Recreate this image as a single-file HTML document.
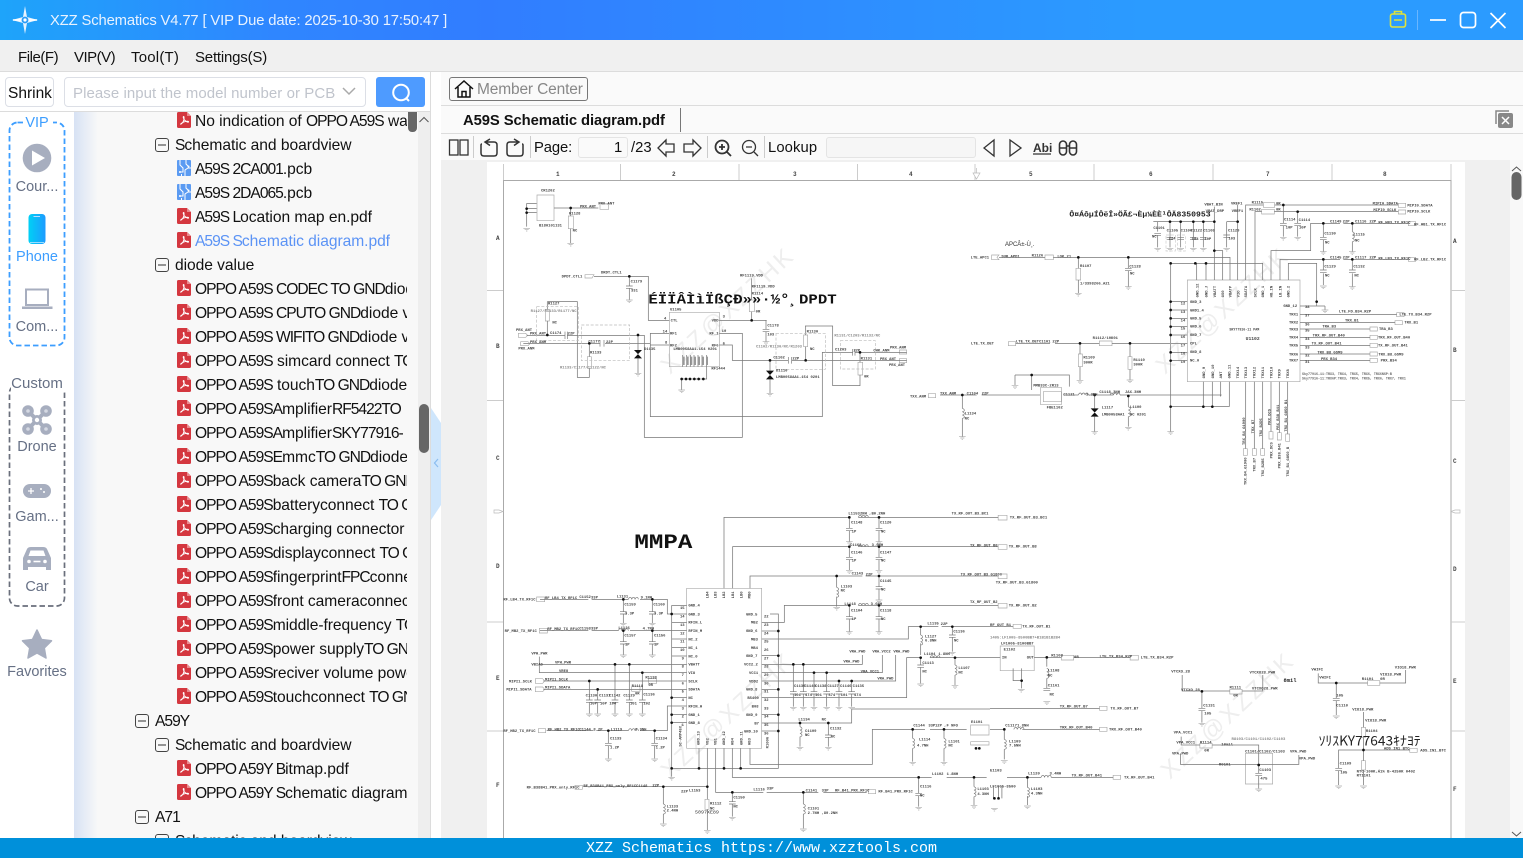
<!DOCTYPE html>
<html><head><meta charset="utf-8"><title>XZZ Schematics</title>
<style>
*{box-sizing:border-box}
html,body{margin:0;padding:0;width:1523px;height:858px;overflow:hidden;background:#fff;font-family:"Liberation Sans","Noto Sans CJK SC",sans-serif;color:#111}
.a{position:absolute}
.t{position:absolute;white-space:nowrap;line-height:20px;height:20px;font-size:15.5px}
#tree .t{font-size:15.6px;letter-spacing:-.05px}
#tree em{font-style:normal;letter-spacing:-1px}
.side{position:absolute;left:0;width:74px;text-align:center;font-size:14.5px;line-height:18px;color:#667085;white-space:nowrap}
svg{position:absolute;overflow:hidden}
.s text{font-family:"Liberation Mono",monospace;font-weight:bold;font-size:11.5px;fill:#444}
.s .w{fill:none;stroke:#777;stroke-width:2.2}
.s .b{fill:none;stroke:#aaa;stroke-width:2}
.s .d{fill:none;stroke:#bbb;stroke-width:2;stroke-dasharray:9 5}
.s .k{fill:#111}
</style></head><body>
<!-- title bar -->
<div class="a" style="left:0;top:0;width:1523px;height:40px;background:linear-gradient(90deg,#1ea4fa 0,#2f86ff 18%,#317dff 32%,#2b9bff 75%,#2b9bff 100%)"></div>
<svg style="left:10px;top:5px" width="30" height="30" viewBox="0 0 30 30"><path d="M15 1L17 12L28 15L17 18L15 29L13 18L2 15L13 12Z" fill="#e6f3ff"/><circle cx="15" cy="15" r="3.4" fill="#2a9cf8"/><circle cx="15" cy="15" r="1.6" fill="#fff"/><path d="M11 15H3M19 15H27" stroke="#fff" stroke-width="1.4"/></svg>
<div class="t" style="left:50px;top:11px;color:#e8f2ff;font-size:14.8px;letter-spacing:-.14px">XZZ Schematics V4.77 [ VIP Due date: 2025-10-30 17:50:47 ]</div>
<svg style="left:1385px;top:6px" width="130" height="28" viewBox="0 0 130 28"><g fill="none" stroke="#dfe33b" stroke-width="1.6"><rect x="5.5" y="8" width="15" height="13" rx="2"/><path d="M9.5 8V5.5H16.500V8M9 14H17"/></g><path d="M32.500 4V24" stroke="#6ab6ff" stroke-width="1"/><g fill="none" stroke="#fff" stroke-width="1.7"><path d="M45 14H61"/><rect x="75.500" y="6.500" width="15" height="15" rx="3"/><path d="M105.500 7L120.500 22M120.500 7L105.500 22"/></g></svg>
<!-- menu -->
<div class="a" style="left:0;top:40px;width:1523px;height:32px;background:#f0f0f0;border-bottom:1px solid #dcdcdc"></div>
<div class="t" style="left:18px;top:48px;font-size:15px;letter-spacing:-.45px">File(F)</div>
<div class="t" style="left:74px;top:48px;font-size:15px;letter-spacing:-.5px">VIP(V)</div>
<div class="t" style="left:131px;top:48px;font-size:15px;letter-spacing:.2px">Tool(T)</div>
<div class="t" style="left:195px;top:48px;font-size:15px;letter-spacing:-.2px">Settings(S)</div>
<!-- search row -->
<div class="a" style="left:0;top:72px;width:431px;height:40px;background:#fff;border-bottom:1px solid #dcdcdc"></div>
<div class="a" style="left:5px;top:77px;width:49px;height:30px;border:1px solid #dcdfe6;border-radius:4px"></div>
<div class="t" style="left:8px;top:84px;font-size:15.5px">Shrink</div>
<div class="a" style="left:64px;top:77px;width:302px;height:30px;border:1px solid #dcdfe6;border-radius:4px"></div>
<div class="t" style="left:73px;top:84px;color:#c0c4cc;font-size:15px;letter-spacing:.06px">Please input the model number or PCB</div>
<svg style="left:340px;top:85px" width="18" height="14"><path d="M3 3L9 9L15 3" fill="none" stroke="#aaa" stroke-width="1.5"/></svg>
<div class="a" style="left:376px;top:77px;width:49px;height:30px;background:#4e9bff;border-radius:3px"></div>
<svg style="left:388px;top:81px" width="26" height="24"><circle cx="13" cy="11.500" r="7.800" fill="none" stroke="#fff" stroke-width="2"/><path d="M18 17L21 20" stroke="#fff" stroke-width="2"/></svg>
<!-- sidebar -->
<svg style="left:0;top:112px" width="74" height="726" viewBox="0 112 74 726">
<rect x="9.500" y="122.500" width="55" height="223" rx="8" fill="none" stroke="#3d9eff" stroke-width="1.800" stroke-dasharray="5.500 3"/>
<rect x="9.500" y="385" width="55" height="221" rx="8" fill="none" stroke="#6a6f7c" stroke-width="1.700" stroke-dasharray="5.500 3"/>
<rect x="23" y="115" width="30" height="16" fill="#fff"/><rect x="11" y="376" width="54" height="15" fill="#fff"/>
<circle cx="37" cy="158" r="14.300" fill="#a7aebf"/><path d="M32 150.500L45 158L32 165.500Z" fill="#fff"/>
<defs><linearGradient id="ph" x1="0" x2="1"><stop offset="0" stop-color="#00d0f5"/><stop offset="1" stop-color="#1d9bff"/></linearGradient></defs>
<rect x="28.500" y="214" width="17" height="30" rx="3.500" fill="url(#ph)"/><path d="M33.500 216.500H40" stroke="#bdf" stroke-width="1"/><path d="M30 242.500H44" stroke="#9df" stroke-width="1"/>
<path d="M26 289.500H48V305H26Z" fill="none" stroke="#a7aebf" stroke-width="2"/><path d="M22 306.500H52.500V309H22Z" fill="#a7aebf"/>
<path d="M28 411L46 429M46 411L28 429" stroke="#a7aebf" stroke-width="4" fill="none"/><g fill="#a7aebf"><circle cx="28" cy="411" r="5.800"/><circle cx="46" cy="411" r="5.800"/><circle cx="28" cy="429" r="5.800"/><circle cx="46" cy="429" r="5.800"/><circle cx="37" cy="420" r="5"/></g><g fill="#d5d9e3"><circle cx="28" cy="411" r="1.800"/><circle cx="46" cy="411" r="1.800"/><circle cx="28" cy="429" r="1.800"/><circle cx="46" cy="429" r="1.800"/></g><circle cx="37" cy="420" r="2.200" fill="#fff"/>
<rect x="23" y="484" width="28" height="14" rx="7" fill="#a7aebf"/><path d="M28 491H34M31 488V494" stroke="#fff" stroke-width="1.300"/><circle cx="41" cy="489" r="1" fill="#fff"/><circle cx="44" cy="492" r="1" fill="#fff"/>
<path d="M23 570V558L27 549Q28 547 31 547H43Q46 547 47 549L51 558V570H46V567H28V570Z" fill="#a7aebf"/><path d="M28.500 556L30.500 550.500H43.500L45.500 556Z" fill="#fff"/><circle cx="29" cy="561.500" r="1.800" fill="#fff"/><circle cx="45" cy="561.500" r="1.800" fill="#fff"/><path d="M33.500 561.500H40.500" stroke="#fff" stroke-width="1.600"/>
<path d="M37 630L41.500 639.500L51.500 640.800L44.300 648L46 658L37 653L28 658L29.700 648L22.500 640.800L32.500 639.500Z" fill="#a7aebf" stroke="#a7aebf" stroke-width="1.500" stroke-linejoin="round"/>
</svg>
<div class="side" style="top:114px;color:#3d9eff">VIP</div>
<div class="side" style="top:178px">Cour...</div>
<div class="side" style="top:248px;color:#3d9eff">Phone</div>
<div class="side" style="top:318px">Com...</div>
<div class="side" style="top:375px;font-size:15px">Custom</div>
<div class="side" style="top:438px">Drone</div>
<div class="side" style="top:508px">Gam...</div>
<div class="side" style="top:578px">Car</div>
<div class="side" style="top:663px">Favorites</div>
<!-- tree -->
<div class="a" style="left:74px;top:112px;width:345px;height:726px;background:linear-gradient(90deg,#d7e2f4 0,#f8f8f8 24px)"></div>
<div class="a" style="left:418px;top:112px;width:12px;height:726px;background:#eeeeee"></div>
<div class="a" style="left:430px;top:72px;width:1px;height:766px;background:#dcdcdc"></div>
<div class="a" style="left:408px;top:112px;width:9px;height:20px;background:#666;border-radius:0 0 4px 4px;z-index:2"></div>
<div class="a" style="left:419px;top:404px;width:10px;height:49px;background:#666;border-radius:5px"></div>
<svg style="left:418px;top:114px" width="12" height="12"><path d="M1.500 8L6 3.500L10.500 8" fill="none" stroke="#555" stroke-width="1"/></svg>
<svg style="left:431px;top:405px" width="11" height="118"><path d="M0 3L10 18V100L0 115Z" fill="#cfe6fc"/><path d="M7 54L3.500 58L7 62" fill="none" stroke="#8bbdf0" stroke-width="1.200"/></svg>
<svg width="0" height="0" style="position:absolute"><defs>
<g id="pdf"><path d="M0 1.500Q0 0 1.500 0H10L14 4V14.500Q14 16 12.500 16H1.500Q0 16 0 14.500Z" fill="#d4373f"/><path d="M10 0V4H14" fill="#e98a8e"/><path d="M3.500 12.500C6 11 7.500 8 7 5C6.800 4 6 4.500 6.300 5.500C6.800 7.500 8.800 10 11 10.200C11.900 10.200 11.700 9.200 10.800 9.200C8 9.200 5 10.500 3.300 12.300" fill="none" stroke="#fff" stroke-width="1"/></g>
<g id="pcb"><rect width="14" height="16" rx="1" fill="#5b9bf2"/><path d="M3 0V5L6 8V12H2M9 0V4L11.500 6.500M8 16V10L11 8H14M4.500 14V16" fill="none" stroke="#fff" stroke-width="1"/><circle cx="11.500" cy="6.500" r="1" fill="#fff"/><circle cx="3" cy="12" r="1" fill="#fff"/></g>
<g id="min"><rect x=".5" y=".5" width="13" height="13" rx="2.500" fill="none" stroke="#444" stroke-width="1"/><path d="M3 7H11" stroke="#444" stroke-width="1.100"/></g>
</defs></svg>
<div id="tree" class="a" style="left:0;top:112px;width:407px;height:726px;overflow:hidden">
<svg style="left:0;top:0" width="407" height="740" viewBox="0 112 407 740">
<use href="#pdf" x="177" y="112"/><use href="#min" x="155" y="138"/><use href="#pcb" x="177" y="160"/><use href="#pcb" x="177" y="184"/><use href="#pdf" x="177" y="208"/><use href="#pdf" x="177" y="232"/><use href="#min" x="155" y="258"/>
<use href="#pdf" x="177" y="280"/><use href="#pdf" x="177" y="304"/><use href="#pdf" x="177" y="328"/><use href="#pdf" x="177" y="352"/><use href="#pdf" x="177" y="376"/><use href="#pdf" x="177" y="400"/><use href="#pdf" x="177" y="424"/><use href="#pdf" x="177" y="448"/><use href="#pdf" x="177" y="472"/><use href="#pdf" x="177" y="496"/><use href="#pdf" x="177" y="520"/><use href="#pdf" x="177" y="544"/><use href="#pdf" x="177" y="568"/><use href="#pdf" x="177" y="592"/><use href="#pdf" x="177" y="616"/><use href="#pdf" x="177" y="640"/><use href="#pdf" x="177" y="664"/><use href="#pdf" x="177" y="688"/>
<use href="#min" x="135" y="714"/><use href="#min" x="155" y="738"/><use href="#pdf" x="177" y="760"/><use href="#pdf" x="177" y="784"/><use href="#min" x="135" y="810"/><use href="#min" x="155" y="834"/>
</svg>
<div class="t" style="left:195px;top:0px">No indication of <em>OPPO A59S</em> warranty</div>
<div class="t" style="left:175px;top:24px"><em>S</em>chematic and boardview</div>
<div class="t" style="left:195px;top:48px"><em>A59S 2CA001</em>.pcb</div>
<div class="t" style="left:195px;top:72px"><em>A59S 2DA065</em>.pcb</div>
<div class="t" style="left:195px;top:96px"><em>A59S L</em>ocation map en.pdf</div>
<div class="t" style="left:195px;top:120px;color:#5b93f5"><em>A59S S</em>chematic diagram.pdf</div>
<div class="t" style="left:175px;top:144px">diode value</div>
<div class="t" style="left:195px;top:168px"><em>OPPO A59S CODEC TO GND</em>diode value</div>
<div class="t" style="left:195px;top:192px"><em>OPPO A59S CPUTO GND</em>diode value</div>
<div class="t" style="left:195px;top:216px"><em>OPPO A59S WIFITO GND</em>diode value</div>
<div class="t" style="left:195px;top:240px"><em>OPPO A59S</em> simcard connect <em>TO GND</em></div>
<div class="t" style="left:195px;top:264px"><em>OPPO A59S</em> touch<em>TO GND</em>diode value</div>
<div class="t" style="left:195px;top:288px"><em>OPPO A59SA</em>mplifier<em>RF5422TO</em></div>
<div class="t" style="left:195px;top:312px"><em>OPPO A59SA</em>mplifier<em>SKY77916-</em></div>
<div class="t" style="left:195px;top:336px"><em>OPPO A59SE</em>mmc<em>TO GND</em>diode value</div>
<div class="t" style="left:195px;top:360px"><em>OPPO A59S</em>back camera<em>TO GND</em></div>
<div class="t" style="left:195px;top:384px"><em>OPPO A59S</em>batteryconnect <em>TO GND</em></div>
<div class="t" style="left:195px;top:408px"><em>OPPO A59S</em>charging connector <em>TO</em></div>
<div class="t" style="left:195px;top:432px"><em>OPPO A59S</em>displayconnect <em>TO GND</em></div>
<div class="t" style="left:195px;top:456px"><em>OPPO A59S</em>fingerprint<em>FPC</em>connect</div>
<div class="t" style="left:195px;top:480px"><em>OPPO A59S</em>front cameraconnect <em>TO</em></div>
<div class="t" style="left:195px;top:504px"><em>OPPO A59S</em>middle-frequency <em>TO</em></div>
<div class="t" style="left:195px;top:528px"><em>OPPO A59S</em>power supply<em>TO GND</em></div>
<div class="t" style="left:195px;top:552px"><em>OPPO A59S</em>reciver volume power</div>
<div class="t" style="left:195px;top:576px"><em>OPPO A59S</em>touchconnect <em>TO GND</em></div>
<div class="t" style="left:155px;top:600px"><em>A59Y</em></div>
<div class="t" style="left:175px;top:624px"><em>S</em>chematic and boardview</div>
<div class="t" style="left:195px;top:648px"><em>OPPO A59Y B</em>itmap.pdf</div>
<div class="t" style="left:195px;top:672px"><em>OPPO A59Y S</em>chematic diagram</div>
<div class="t" style="left:155px;top:696px"><em>A71</em></div>
<div class="t" style="left:175px;top:720px"><em>S</em>chematic and boardview</div>
</div>
<!-- right panel -->
<div class="a" style="left:441px;top:72px;width:1082px;height:34px;background:#fafafa;border-bottom:1px solid #dcdcdc"></div>
<div class="a" style="left:441px;top:106px;width:1082px;height:28px;background:#fafafa;border-bottom:1px solid #dcdcdc"></div>
<div class="a" style="left:441px;top:134px;width:1082px;height:26px;background:#fafafa"></div>
<div class="a" style="left:441px;top:160px;width:1069px;height:678px;background:#f0f0f0"></div>
<div class="a" style="left:1510px;top:160px;width:13px;height:678px;background:#f8f8f8"></div>
<div class="a" style="left:449px;top:77px;width:139px;height:24px;border:1px solid #777;border-radius:3px"></div>
<svg style="left:453px;top:79px" width="22" height="20"><path d="M2 10L11 2L20 10M5 8V18H17V8M9 18V12.500H13V18" fill="none" stroke="#111" stroke-width="1.500"/></svg>
<div class="t" style="left:477px;top:80px;color:#888;font-size:15.5px;letter-spacing:-.15px">Member Center</div>
<div class="t" style="left:463px;top:111px;font-weight:bold;font-size:14.8px;letter-spacing:-.08px">A59S Schematic diagram.pdf</div>
<div class="a" style="left:680px;top:108px;width:1px;height:24px;background:#777"></div>
<svg style="left:1494px;top:109px" width="20" height="20"><path d="M2 15V2H15" fill="none" stroke="#888" stroke-width="1.500"/><rect x="4" y="4" width="15" height="15" rx="2" fill="#888"/><path d="M8 8L15 15M15 8L8 15" stroke="#fff" stroke-width="1.500"/></svg>
<svg style="left:445px;top:134px" width="640" height="26" viewBox="445 134 640 26"><g fill="none" stroke="#333" stroke-width="1.300">
<rect x="449.500" y="140" width="8.500" height="15"/><rect x="460" y="140" width="8" height="15"/>
<path d="M490 139L485 142L490 145.500M486 142H494Q497 142 497 145V153Q497 156 494 156H484Q481 156 481 153V145Q481 144 482 144" stroke-width="1.500"/>
<path d="M514 139L519 142L514 145.500M518 142H510Q507 142 507 145V153Q507 156 510 156H520Q523 156 523 153V145Q523 144 522 144" stroke-width="1.500"/>
<path d="M658 148L666 140V144H674V152H666V156Z"/>
<path d="M701 148L693 140V144H684V152H693V156Z"/>
<circle cx="722" cy="147" r="6.500" stroke-width="1.800"/><path d="M727 152L731 156M719 147H725M722 144V150" stroke-width="1.800"/>
<circle cx="749" cy="147" r="6.500"/><path d="M754 152L758 156M746 147H752"/>
<path d="M994 140L984 148L994 156Z"/><path d="M1010 140L1021 148L1010 156Z"/>
<path d="M1033 154H1051" />
<rect x="1059.500" y="141" width="7" height="14" rx="3.500" stroke-width="1.600"/><rect x="1069.500" y="141" width="7" height="14" rx="3.500" stroke-width="1.600"/><path d="M1066 146H1070M1059.500 148H1066.500M1069.500 148H1076.500" stroke-width="1.600"/>
</g><g stroke="#ccc"><path d="M473.500 136V158M530.500 136V158M707.500 136V158M764.500 136V158"/></g></svg>
<div class="t" style="left:534px;top:138px;font-size:14.800px;letter-spacing:-.1px">Page:</div>
<div class="a" style="left:578px;top:137px;width:50px;height:21px;border:1px solid #e4e4e4;border-radius:3px;background:#fafafa"></div>
<div class="t" style="left:614px;top:138px;font-size:14.800px">1</div>
<div class="t" style="left:631px;top:138px;font-size:14.800px">/23</div>
<div class="t" style="left:768px;top:138px;font-size:14.800px;letter-spacing:.1px">Lookup</div>
<div class="a" style="left:826px;top:137px;width:150px;height:21px;border:1px solid #e4e4e4;border-radius:3px;background:#f6f6f6"></div>
<div class="t" style="left:1033px;top:138px;font-size:12px;font-weight:bold;color:#333">Abi</div>
<!-- scrollbar -->
<svg style="left:1510px;top:160px" width="13" height="678"><path d="M2 11L6.500 7L11 11" fill="none" stroke="#555"/><rect x="1.500" y="12" width="10" height="28" rx="5" fill="#666"/><path d="M2 672L6.500 676L11 672" fill="none" stroke="#555"/></svg>
<!-- page -->
<div class="a" style="left:487px;top:162px;width:978px;height:676px;background:#fff"></div>
<svg class="s" style="left:487px;top:162px" width="978" height="676" viewBox="487 162 978 676">
<defs>
<g id="g"><path d="M-10 0H10M-6 4H6M-2 8H2" stroke="#aaa" stroke-width="2" fill="none"/></g>
<g id="c"><path d="M-10 0H10M-10 7H10" stroke="#777" stroke-width="2" fill="none"/></g>
<g id="l"><path d="M0 0C8 3 8 9 0 10C8 13 8 19 0 20C8 23 8 29 0 30" stroke="#777" stroke-width="2" fill="none"/></g>
<g id="h"><path d="M0 0C3 -8 9 -8 10 0C13 -8 19 -8 20 0C23 -8 29 -8 30 0" stroke="#777" stroke-width="2" fill="none"/></g>
</defs>
<!-- watermarks -->
<g>
<text transform="translate(670 375) rotate(-43)" style="font-size:24px;font-weight:normal;fill:#eeeeee;font-family:'Liberation Sans'" textLength="170">XZZ@XZZHK</text>
<text transform="translate(1165 375) rotate(-43)" style="font-size:24px;font-weight:normal;fill:#eeeeee;font-family:'Liberation Sans'" textLength="170">XZZ@XZZHK</text>
<text transform="translate(670 780) rotate(-43)" style="font-size:24px;font-weight:normal;fill:#eeeeee;font-family:'Liberation Sans'" textLength="170">XZZ@XZZHK</text>
<text transform="translate(1170 780) rotate(-43)" style="font-size:24px;font-weight:normal;fill:#eeeeee;font-family:'Liberation Sans'" textLength="170">XZZ@XZZHK</text>
</g>
<!-- frame -->
<path d="M503.500 838V180.500H1451V838" fill="none" stroke="#aaa" stroke-width="1"/>
<path d="M503.500 164V180M620.500 164V180M739 164V180M857.500 164V180M975 164V180M1094 164V180M1213 164V180M1332 164V180M1451 164V180" stroke="#ccc" stroke-width="1"/>
<path d="M487 290.500H503M487 400.500H503M487 622H503M487 731H503M1451 290.500H1465M1451 400.500H1465M1451 622H1465M1451 731H1465" stroke="#ccc" stroke-width="1"/>
<path d="M973 173H980L976.500 179ZM976.500 168V173M494 510H499L503 511.500L499 513H494ZM1460 510H1455L1451 511.500L1455 513H1460Z" fill="#fff" stroke="#bbb" stroke-width=".7"/>
<g style="font-size:5.800px"><text x="556" y="176" style="font-size:6px">1</text><text x="672" y="176" style="font-size:6px">2</text><text x="793" y="176" style="font-size:6px">3</text><text x="909" y="176" style="font-size:6px">4</text><text x="1029" y="176" style="font-size:6px">5</text><text x="1149" y="176" style="font-size:6px">6</text><text x="1266" y="176" style="font-size:6px">7</text><text x="1383" y="176" style="font-size:6px">8</text>
<text x="496" y="240" style="font-size:6px">A</text><text x="496" y="348" style="font-size:6px">B</text><text x="496" y="460" style="font-size:6px">C</text><text x="496" y="568" style="font-size:6px">D</text><text x="496" y="680" style="font-size:6px">E</text><text x="496" y="787" style="font-size:6px">F</text>
<text x="1453" y="243" style="font-size:6px">A</text><text x="1453" y="352" style="font-size:6px">B</text><text x="1453" y="463" style="font-size:6px">C</text><text x="1453" y="571" style="font-size:6px">D</text><text x="1453" y="683" style="font-size:6px">E</text><text x="1453" y="791" style="font-size:6px">F</text></g>

<!-- Group 1 -->
<g transform="translate(490 160) scale(.33333)">
<path class="b" d="M141 105h51v77h-51zM235 168h15v38h-15zM538 457h150v163h-150zM778 420h15v35h-15zM166 448h12v35h-12zM292 590h12v35h-12zM941 525h12v35h-12zM1104 607h14v38h-14zM285 344h27l-6 10h-21zM330 130h26v18h-26zM85 520h22l6 6l-6 6h-22zM92 545h22l6 6l-6 6h-22zM1228 570h22v12h-22zM1228 596h22v12h-22zM1315 701h22v12h-22z"/>
<path class="w" d="M192 144H325M110 130V200M110 130H140M110 145H140M110 158H140M242 144V168M242 206V250M312 349H475V481H538M418 349V378M418 385V420M688 481H830M785 355V420M785 455V481M828 481V508M828 516V545M110 526H225M232 526H463V832H757V520H688M100 550H330M345 550H481V770H997V577H1088M1095 577H1250M481 550V520H538M481 555H538M444 525V570M444 595V640M688 555H727V601H895M905 601H1250M840 601V632M840 658V700M575 657H650V620M575 657V690M172 425H262V652H298V625M172 425V448M172 483V526M298 550V590M945 498H1028V677H1110V645M947 498V525M947 560V601M1110 577V607M578 585V620M590 585V620M601 585V620M612 585V620M624 585V620M636 585V620M650 585V620"/>
<path class="d" d="M140 440h125v102h-125zM274 495h145v107h-145zM858 520h148v108h-148zM1051 542h105v85h-105z"/>
<path class="k" d="M432 570H456L432 595H456ZM828 632H852L828 658H852Z"/>
<path d="M578 590h6v25h-6zM590 590h6v25h-6zM601 590h6v25h-6zM612 590h6v25h-6zM624 590h6v25h-6zM636 590h6v25h-6zM648 590h6v25h-6z" fill="#999"/>
<g class="k"><circle cx="242" cy="144" r="4"/><circle cx="110" cy="146" r="4"/><circle cx="110" cy="158" r="4"/><circle cx="418" cy="349" r="4"/><circle cx="785" cy="481" r="4"/><circle cx="172" cy="525" r="4"/><circle cx="298" cy="550" r="4"/><circle cx="444" cy="525" r="4"/><circle cx="840" cy="601" r="4"/><circle cx="947" cy="601" r="4"/><circle cx="1110" cy="577" r="4"/><circle cx="575" cy="657" r="4"/><circle cx="588" cy="657" r="4"/><circle cx="600" cy="657" r="4"/><circle cx="613" cy="657" r="4"/><circle cx="626" cy="657" r="4"/><circle cx="640" cy="657" r="4"/></g>
<use href="#g" x="110" y="205"/><use href="#g" x="242" y="250"/><use href="#g" x="418" y="420"/><use href="#g" x="828" y="545"/><use href="#g" x="444" y="640"/><use href="#g" x="840" y="700"/><use href="#g" x="575" y="690"/>
<use href="#c" x="418" y="378"/><use href="#c" x="828" y="508"/>
<path d="M225 515V537M232 515V537M330 540V560M342 540V560M895 591V611M905 591V611M1088 567V587M1095 567V587" stroke="#777" stroke-width="2"/>
<text x="153" y="94">CR1202</text><text x="237" y="163">R1128</text><text x="147" y="199">B180101131</text><text x="270" y="142">PRX_ANT</text><text x="325" y="134">PRX_ANT</text><text x="248" y="215">NC</text><text x="215" y="353">DPDT_CTL1</text><text x="333" y="340">DRDT_CTL1</text><text x="422" y="368">C1179</text><text x="423" y="395">331</text><text x="750" y="350">RF1119_VDD</text><text x="785" y="383">RF1119_VDD</text><text x="785" y="403">R1114</text><text x="797" y="458">0R</text><text x="832" y="500">C1178</text><text x="832" y="526">103</text><text x="540" y="452">U1105</text><text x="542" y="485">CTL</text><text x="540" y="523">RF1</text><text x="540" y="559">RF2</text><text x="665" y="485">VDD</text><text x="658" y="523">RF_1</text><text x="665" y="559">RF6</text><text x="550" y="570">LMB0058AA1-154 0201</text><text x="664" y="628">RF1444</text><text x="174" y="434">R1127</text><text x="78" y="513">PRX_ANT</text><text x="120" y="524">PRX_ANT</text><text x="120" y="549">PRX_ANM</text><text x="85" y="568">PRX_ANM</text><text x="180" y="522">C1174</text><text x="233" y="524">22P</text><text x="295" y="547">C1177</text><text x="348" y="549">22P</text><text x="300" y="580">R1133</text><text x="187" y="490">NC</text><text x="462" y="570">D1135</text><text x="850" y="595">C1102</text><text x="907" y="599">22P</text><text x="858" y="634">D1110</text><text x="858" y="654">LMB0058AA1-154 0201</text><text x="950" y="517">R1130</text><text x="960" y="570">NC</text><text x="1035" y="572">C1203</text><text x="1090" y="574">22P</text><text x="1150" y="574">CHK_ANM</text><text x="1170" y="600">PRX_ANT</text><text x="1200" y="566">PRX_ANM</text><text x="1197" y="618">PRX_ANT</text><text x="1112" y="598">R1131</text><text x="1122" y="653">0R</text><text x="1260" y="712">TXX_ANM</text><text x="522" y="479">4</text><text x="518" y="518">14</text><text x="525" y="550">8</text><text x="698" y="472">3</text><text x="695" y="516">10</text><text x="698" y="553">6</text>
<text x="122" y="456" style="fill:#888">R1127/R1133/R1177/NC</text><text x="210" y="625" style="fill:#888">R1133/C1177/C1122/NC</text><text x="798" y="563" style="fill:#888">C1102/R1130/NC/R1203</text><text x="1033" y="530" style="fill:#888">R1131/C1203/R1132/NC</text>
<text x="475" y="431" textLength="565" lengthAdjust="spacingAndGlyphs" style="font-size:42px;fill:#111;font-family:'Liberation Mono',monospace">ÉÏÏÂÌìÏßÇÐ»»·½°¸DPDT</text>
</g>

<!-- Group 2 -->
<g transform="translate(940 160)">
<g transform="scale(.33333)">
<path class="b" d="M742 360h338v305h-338zM315 285h25v14h-25zM408 325h14v35h-14zM478 543h38v14h-38zM415 582h12v38h-12zM564 590h12v38h-12zM302 682h62v52h-62zM970 128h34v14h-34zM965 148h38v14h-38zM155 285h22l-6 7l6 7h-22zM205 545h22v12h-22zM1375 130h22v12h-22zM1375 150h22v12h-22zM1405 185h22v12h-22zM1405 292h22v12h-22zM1370 458h22v12h-22zM1365 482h22v12h-22zM1290 501h22v12h-22zM1290 526h22v12h-22zM1290 550h22v12h-22zM1290 576h22v12h-22zM1290 595h22v12h-22zM910 866h12v20h-12zM937 866h12v20h-12zM962 866h12v20h-12zM987 815h12v22h-12zM1012 818h12v22h-12zM1037 822h12v22h-12z"/>
<path class="w" d="M692 310H968V360M692 310V815M770 310V360M798 310V360M692 425H742M692 450H742M692 475H742M692 500H742M692 525H742M692 550H742M692 577H742M692 602H742M823 360V140M848 360V272H823M870 360V292H340M177 292H315M893 360V135M893 185H860M917 360V135H970M1004 135H1375M945 360V155H965M1003 155H1375M993 360V272H1112V190H1200M1210 190H1410M1020 360V298H1200M1210 298H1410M1045 360V310H1130V425M1080 438H1155M1130 425V438M1155 438V450M1080 463H1370M1080 488H1365M1080 507H1290M1080 532H1290M1080 556H1290M1080 582H1290M1080 601H1290M790 665V740M817 665V740M842 665V708H840M868 665V740M692 740H868M917 665V866M943 665V866M968 665V866M993 665V815M1018 665V818M1043 665V822M640 185H823M653 185V215M653 225V262M690 185V235V262M722 185V262M760 185V262M790 185V262M860 185V222V262M1030 135V190M1030 198V230M1073 155V190M1073 198V230M1150 190V232M1150 240V275M1237 190V215M1237 245V275M1150 298V330M1150 340V375M1237 298V330M1237 340V380M415 292V325M415 360V400M565 292V325M565 332V380M227 550H330M345 550H478M516 550H690M420 550V582M420 620V660M570 550V590M570 628V660M0 705H110M125 705H300M370 705H415M445 705H520M540 705H845M225 645H388V680M275 645V690M225 645V675M464 705V745M464 770V815M67 705V745M67 775V830M565 705V740M565 770V800"/>
<g class="k"><path d="M452 745H476L452 770H476Z"/><circle cx="823" cy="185" r="4"/><circle cx="690" cy="185" r="4"/><circle cx="722" cy="185" r="4"/><circle cx="760" cy="185" r="4"/><circle cx="790" cy="185" r="4"/><circle cx="893" cy="185" r="4"/><circle cx="823" cy="272" r="4"/><circle cx="692" cy="310" r="4"/><circle cx="766" cy="310" r="4"/><circle cx="798" cy="310" r="4"/><circle cx="1030" cy="135" r="4"/><circle cx="1073" cy="155" r="4"/><circle cx="1150" cy="190" r="4"/><circle cx="1237" cy="190" r="4"/><circle cx="1150" cy="298" r="4"/><circle cx="1237" cy="298" r="4"/><circle cx="1130" cy="425" r="4"/><circle cx="415" cy="292" r="4"/><circle cx="565" cy="292" r="4"/><circle cx="420" cy="550" r="4"/><circle cx="570" cy="550" r="4"/><circle cx="692" cy="425" r="4"/><circle cx="692" cy="450" r="4"/><circle cx="692" cy="475" r="4"/><circle cx="692" cy="500" r="4"/><circle cx="692" cy="525" r="4"/><circle cx="692" cy="577" r="4"/><circle cx="692" cy="602" r="4"/><circle cx="692" cy="740" r="4"/><circle cx="790" cy="740" r="4"/><circle cx="817" cy="740" r="4"/><circle cx="67" cy="705" r="4"/><circle cx="464" cy="705" r="4"/><circle cx="565" cy="708" r="4"/><circle cx="275" cy="645" r="4"/></g>
<use href="#c" x="653" y="220"/><use href="#c" x="690" y="232"/><use href="#c" x="722" y="232"/><use href="#c" x="760" y="232"/><use href="#c" x="790" y="232"/><use href="#c" x="860" y="225"/><use href="#c" x="1030" y="190"/><use href="#c" x="1073" y="190"/><use href="#c" x="1150" y="232"/><use href="#c" x="1150" y="330"/><use href="#c" x="1237" y="330"/><use href="#c" x="565" y="325"/>
<use href="#l" x="1237" y="215"/><use href="#l" x="67" y="745"/><use href="#l" x="565" y="740"/><use href="#h" x="415" y="705"/><use href="#h" x="510" y="705"/>
<use href="#g" x="653" y="265"/><use href="#g" x="690" y="265"/><use href="#g" x="722" y="265"/><use href="#g" x="760" y="265"/><use href="#g" x="790" y="265"/><use href="#g" x="860" y="265"/><use href="#g" x="1030" y="232"/><use href="#g" x="1073" y="232"/><use href="#g" x="1150" y="275"/><use href="#g" x="1237" y="275"/><use href="#g" x="1150" y="378"/><use href="#g" x="1237" y="380"/><use href="#g" x="415" y="400"/><use href="#g" x="565" y="380"/><use href="#g" x="420" y="662"/><use href="#g" x="570" y="660"/><use href="#g" x="692" y="815"/><use href="#g" x="225" y="677"/><use href="#g" x="464" y="815"/><use href="#g" x="67" y="830"/><use href="#g" x="565" y="802"/><use href="#g" x="1155" y="450"/>
<path class="d" d="M678 225h28v48h-28zM712 225h24v48h-24z" style="stroke:#ccc"/>
<path class="b" d="M310 695h55v30h-55z"/>
<text x="388" y="170" textLength="424" lengthAdjust="spacingAndGlyphs" style="font-size:23px;fill:#222;font-family:'Liberation Mono',monospace">Ô¤ÁôµÍÔëÎ»ÖÃ£¬Èµ¼ÈÈ¹ÔÄ8350953</text>
<text x="195" y="258" style="font-size:18px;font-weight:normal;font-family:'Liberation Sans';fill:#333">APCÂ±-Ù¸.</text>
<text x="92" y="295">LTE_APC1</text><text x="184" y="292">SUB_APD1</text><text x="275" y="290">R1126</text><text x="352" y="292">LOK_21</text><text x="420" y="321">R1107</text><text x="420" y="373">1/3398266_A21</text><text x="568" y="322">C1128</text><text x="570" y="343">NC</text>
<text x="793" y="136">VBAT_BIN</text><text x="797" y="156">VBAT_DRP</text><text x="873" y="133">VREF1</text><text x="875" y="156">VREF1</text><text x="935" y="131">R1115</text><text x="928" y="151">R1102</text><text x="1008" y="133">0R</text><text x="1008" y="152">0R</text><text x="1298" y="134">MIPI0_SDATA</text><text x="1300" y="153">MIPI0_SCLK</text><text x="1402" y="139">MIPI0_SDATA</text><text x="1402" y="158">MIPI0_SCLK</text>
<text x="640" y="207">C1101</text><text x="636" y="232">NC</text><text x="680" y="214">C1105</text><text x="722" y="214">C1106</text><text x="752" y="214">C1122</text><text x="790" y="214">C1108</text><text x="864" y="214">C1129</text><text x="865" y="238">103</text><text x="686" y="238">224</text><text x="755" y="240">104</text><text x="793" y="240">10P</text><text x="1032" y="182">C1114</text><text x="1076" y="183">C1114</text><text x="1037" y="206">10P</text><text x="1077" y="206">10P</text>
<text x="1170" y="188">C1149</text><text x="1208" y="188">22P</text><text x="1245" y="188">C1116</text><text x="1288" y="188">22P</text><text x="1315" y="190">RF_HB3_TX_RF1C</text><text x="1422" y="196">RF_HB1_TX_RF1C</text><text x="1153" y="223">C1130</text><text x="1155" y="250">NC</text><text x="1240" y="226">L1115</text><text x="1245" y="245">NC</text>
<text x="1170" y="295">C1145</text><text x="1208" y="296">22P</text><text x="1245" y="295">C1117</text><text x="1288" y="296">22P</text><text x="1315" y="298">RF_LB3_TX_RF1C</text><text x="1422" y="302">RF_LB2_TX_RF1C</text><text x="1153" y="323">C1129</text><text x="1155" y="350">NC</text><text x="1240" y="323">C1132</text><text x="1243" y="350">NC</text>
<text x="868" y="512" style="font-size:10px">SKY77916-11 PAM</text><text x="917" y="540" style="font-size:14px">U1102</text>
<text x="750" y="429">GND_3</text><text x="750" y="454">GND1_4</text><text x="750" y="479">GND_5</text><text x="750" y="503">GND_6</text><text x="750" y="528">GND_7</text><text x="750" y="554">CPL</text><text x="750" y="579">GND_8</text><text x="750" y="605">NC_0</text><text x="722" y="434">12</text><text x="722" y="459">13</text><text x="722" y="484">14</text><text x="722" y="508">15</text><text x="722" y="534">16</text><text x="722" y="559">17</text><text x="722" y="584">18</text><text x="722" y="609">19</text>
<text x="1030" y="441">GND_12</text><text x="1047" y="467">TRX1</text><text x="1047" y="491">TRX2</text><text x="1047" y="511">TRX3</text><text x="1047" y="536">TRX4</text><text x="1047" y="560">TRX5</text><text x="1047" y="586">TRX6</text><text x="1047" y="605">TRX7</text><text x="1095" y="444">38</text><text x="1095" y="470">37</text><text x="1095" y="496">36</text><text x="1095" y="515">35</text><text x="1095" y="540">34</text><text x="1095" y="565">33</text><text x="1095" y="590">32</text><text x="1095" y="609">31</text>
<text x="1197" y="458">LTE_FD_B34_R2P</text><text x="1378" y="466">LTE_TX_B34_R2P</text><text x="1215" y="484">TRX_B1</text><text x="1393" y="491">TRX_B1</text><text x="1147" y="503">TRA_B3</text><text x="1317" y="510">TRA_B3</text><text x="1118" y="530">TRX_RF_OUT_B40</text><text x="1314" y="536">TRX_RF_OUT_B40</text><text x="1115" y="554">TX_RF_OUT_B41</text><text x="1314" y="560">TX_RF_OUT_B41</text><text x="1132" y="580">TRX_B8_GSM9</text><text x="1315" y="586">TRX_B8_GSM9</text><text x="1143" y="600">PRX_B34</text><text x="1322" y="605">PRX_B34</text>
<text x="1086" y="645" style="font-size:10px;fill:#666">Sky77916-11:TRX3, TRX4, TRX5, TRX6, TRX6NSP:B</text><text x="1086" y="659" style="font-size:10px;fill:#666">Sky77916-11:TRX6P:TRX3, TRX4, TRX5, TRX6, TRX7, TRX1</text>
<text x="93" y="553">LTE_TX_DET</text><text x="228" y="547">LTE_TX_DET</text><text x="297" y="547">C1101</text><text x="337" y="548">22P</text><text x="458" y="537">R1112/10K01</text><text x="430" y="596">R1109</text><text x="430" y="610">300R</text><text x="580" y="603">R1110</text><text x="580" y="616">300R</text>
<text x="280" y="680">MMB33C-2R13</text><text x="320" y="745">FBE1102</text><text x="0" y="704">TXX_ANM</text><text x="80" y="703">C1104</text><text x="125" y="703">22P</text><text x="370" y="706">C1121</text><text x="438" y="706">3.3NH</text><text x="478" y="699">C1118_3NH</text><text x="555" y="699">JAX.3NH</text><text x="485" y="745">L1117</text><text x="485" y="767">LMB0058AA1</text><text x="570" y="744">L1100</text><text x="570" y="767">NC  0201</text><text x="74" y="763">L1134</text><text x="74" y="778">NC</text>
<g transform="translate(775 412) rotate(-90)"><text>GND_12</text></g><g transform="translate(803 412) rotate(-90)"><text>GND_J</text></g><g transform="translate(828 412) rotate(-90)"><text>VBATT</text></g><g transform="translate(852 412) rotate(-90)"><text>GS0</text></g><g transform="translate(875 412) rotate(-90)"><text>VBATP</text></g><g transform="translate(898 412) rotate(-90)"><text>VIO</text></g><g transform="translate(921 412) rotate(-90)"><text>SDATA</text></g><g transform="translate(949 412) rotate(-90)"><text>SCLK</text></g><g transform="translate(972 412) rotate(-90)"><text>GND_1</text></g><g transform="translate(997 412) rotate(-90)"><text>HB_IN</text></g><g transform="translate(1024 412) rotate(-90)"><text>LB_IN</text></g><g transform="translate(1049 412) rotate(-90)"><text>GND_2</text></g>
<g transform="translate(795 655) rotate(-90)"><text>GND_9</text></g><g transform="translate(822 655) rotate(-90)"><text>GND_10</text></g><g transform="translate(846 655) rotate(-90)"><text>ANT</text></g><g transform="translate(872 655) rotate(-90)"><text>GND_11</text></g><g transform="translate(897 655) rotate(-90)"><text>TRX14</text></g><g transform="translate(921 655) rotate(-90)"><text>TRX13</text></g><g transform="translate(947 655) rotate(-90)"><text>TRX12</text></g><g transform="translate(972 655) rotate(-90)"><text>TRX11</text></g><g transform="translate(997 655) rotate(-90)"><text>TRX10</text></g><g transform="translate(1022 655) rotate(-90)"><text>TRX9</text></g><g transform="translate(1047 655) rotate(-90)"><text>TRX8</text></g>
<g transform="translate(915 855) rotate(-90)"><text>TRX_B4_G1900</text></g><g transform="translate(942 820) rotate(-90)"><text>TRX_B7</text></g><g transform="translate(966 830) rotate(-90)"><text>TRX_B2D5</text></g><g transform="translate(992 795) rotate(-90)"><text>PRX_DCS</text></g><g transform="translate(1017 810) rotate(-90)"><text>PRX_B38_B41</text></g><g transform="translate(1041 815) rotate(-90)"><text>TRX_B1_G850_B1</text></g>
<g transform="translate(919 975) rotate(-90)"><text>TRX_B4_G1900</text></g><g transform="translate(946 935) rotate(-90)"><text>TRX_B7</text></g><g transform="translate(972 950) rotate(-90)"><text>TRX_B2B5</text></g><g transform="translate(997 895) rotate(-90)"><text>PRX_DCS</text></g><g transform="translate(1021 925) rotate(-90)"><text>PRX_B38_B41</text></g><g transform="translate(1047 950) rotate(-90)"><text>TRX_B1_G850_B</text></g>
</g></g>

<!-- Group 3 -->
<g transform="translate(490 500) scale(.33333)">
<path class="b" d="M590 265h225v480h-225zM140 291h24v14h-24zM148 385h24v14h-24zM475 536h25v14h-25zM425 560h25v14h-25zM136 536h22l6 7l-6 7h-22zM136 561h22l6 7l-6 7h-22zM145 686h22v12h-22zM255 856h22v12h-22zM1135 869h22v12h-22zM645 898h12v30h-12zM1442 675h55v30h-55z"/>
<path class="w" d="M545 316V830M545 316H590M545 342H590M545 443H590M545 468H590M545 593H590M545 644H590M545 668H590M590 367H545M590 417H545M702 265V52H1075M1105 52H1500M728 265V140H1075M1105 140H1500M780 265V228H1117M1127 228H1500M1040 228V262M1040 290V320M840 342H865V805H545M815 393H865M815 467H865M815 568H865M815 644H865M815 693H865M815 367H883V316H1075M1105 316H1500M815 417H1255V380H1345M1355 380H1500M815 493H1117V465M815 518H1177V465M815 543H1217V465M815 593H1250V473H1290M1320 473H1500M815 669H1085V627H1500M780 745V793H1147V688H1305M1320 688H1430M727 745V832H1325M1370 832H1490M677 745V877H820M830 877H985M1000 877H1130M652 745V860H590M598 860H280M652 860V898M652 928V990M627 745V805M702 745V805M752 745V805M150 298H295M305 298H415M450 298H532V342H545M150 392H295M305 392H385M420 392H590M150 493H590M148 470V518H590M160 543H590M160 568H590M170 692H310M320 692H415M450 692H532V618H590M400 298V335M400 342V370M487 298V335M487 342V370M400 392V425M400 432V465M487 392V425M487 432V465M355 692V730M355 738V775M494 692V730M494 738V775M1078 52V85M1078 93V125M1167 52V85M1167 93V125M1078 140V172M1078 180V210M1167 140V172M1167 180V210M1167 228V260M1167 268V300M1078 316V350M1078 358V395M1167 316V350M1167 358V395M298 543V600M298 607V640M323 568V600M323 607V640M375 493V600M375 607V640M418 493V600M418 607V640M457 518V600M457 607V640M910 493V575M910 582V620M940 493V575M940 582V620M972 518V575M972 582V620M1010 518V575M1010 582V620M1047 543V575M1047 582V620M1085 543V575M1085 582V620M815 669H930M930 669V680M930 710V740M1015 669V705M1015 712V740M1292 380V405M1292 430V465M1387 380V405M1387 412V455M1292 473V495M1292 503V550M1395 473V495M1395 525V555M1268 688V715M1268 745V785M1362 688V715M1362 745V785M520 860V912M520 942V970M727 877V905M727 912V950M940 877V912M940 942V985M1286 832V880M1286 887V920M1452 832V860M1452 890V915"/>
<g class="k"><circle cx="545" cy="342" r="4"/><circle cx="545" cy="593" r="4"/><circle cx="545" cy="644" r="4"/><circle cx="545" cy="668" r="4"/><circle cx="545" cy="805" r="4"/><circle cx="627" cy="805" r="4"/><circle cx="702" cy="805" r="4"/><circle cx="752" cy="805" r="4"/><circle cx="865" cy="393" r="4"/><circle cx="865" cy="467" r="4"/><circle cx="865" cy="568" r="4"/><circle cx="865" cy="644" r="4"/><circle cx="865" cy="693" r="4"/><circle cx="400" cy="298" r="4"/><circle cx="487" cy="298" r="4"/><circle cx="400" cy="392" r="4"/><circle cx="487" cy="392" r="4"/><circle cx="355" cy="692" r="4"/><circle cx="494" cy="692" r="4"/><circle cx="1078" cy="52" r="4"/><circle cx="1167" cy="52" r="4"/><circle cx="1078" cy="140" r="4"/><circle cx="1167" cy="140" r="4"/><circle cx="1040" cy="228" r="4"/><circle cx="1167" cy="228" r="4"/><circle cx="1078" cy="316" r="4"/><circle cx="1167" cy="316" r="4"/><circle cx="375" cy="493" r="4"/><circle cx="418" cy="493" r="4"/><circle cx="457" cy="518" r="4"/><circle cx="298" cy="543" r="4"/><circle cx="323" cy="568" r="4"/><circle cx="910" cy="493" r="4"/><circle cx="940" cy="493" r="4"/><circle cx="972" cy="518" r="4"/><circle cx="1010" cy="518" r="4"/><circle cx="1047" cy="543" r="4"/><circle cx="1085" cy="543" r="4"/><circle cx="930" cy="669" r="4"/><circle cx="1015" cy="669" r="4"/><circle cx="1292" cy="380" r="4"/><circle cx="1387" cy="380" r="4"/><circle cx="1292" cy="473" r="4"/><circle cx="1395" cy="473" r="4"/><circle cx="1268" cy="688" r="4"/><circle cx="1362" cy="688" r="4"/><circle cx="520" cy="860" r="4"/><circle cx="652" cy="860" r="4"/><circle cx="727" cy="877" r="4"/><circle cx="940" cy="877" r="4"/><circle cx="1286" cy="832" r="4"/><circle cx="1452" cy="832" r="4"/><circle cx="1458" cy="745" r="4"/><circle cx="1468" cy="745" r="4"/></g>
<use href="#c" x="1078" y="85"/><use href="#c" x="1167" y="85"/><use href="#c" x="1078" y="172"/><use href="#c" x="1167" y="172"/><use href="#c" x="1167" y="260"/><use href="#c" x="1078" y="350"/><use href="#c" x="1167" y="350"/><use href="#c" x="400" y="335"/><use href="#c" x="487" y="335"/><use href="#c" x="400" y="425"/><use href="#c" x="487" y="425"/><use href="#c" x="355" y="730"/><use href="#c" x="494" y="730"/><use href="#c" x="298" y="600"/><use href="#c" x="323" y="600"/><use href="#c" x="375" y="600"/><use href="#c" x="418" y="600"/><use href="#c" x="457" y="600"/><use href="#c" x="910" y="575"/><use href="#c" x="940" y="575"/><use href="#c" x="972" y="575"/><use href="#c" x="1010" y="575"/><use href="#c" x="1047" y="575"/><use href="#c" x="1085" y="575"/><use href="#c" x="1015" y="705"/><use href="#c" x="1292" y="495"/><use href="#c" x="1387" y="405"/><use href="#c" x="727" y="905"/><use href="#c" x="1286" y="880"/>
<use href="#l" x="1040" y="262"/><use href="#l" x="930" y="680"/><use href="#l" x="1292" y="405"/><use href="#l" x="1395" y="495"/><use href="#l" x="1268" y="715"/><use href="#l" x="1362" y="715"/><use href="#l" x="520" y="912"/><use href="#l" x="940" y="912"/><use href="#l" x="1452" y="860"/>
<use href="#h" x="415" y="298"/><use href="#h" x="385" y="392"/><use href="#h" x="415" y="692"/><use href="#h" x="1105" y="140"/><use href="#h" x="1105" y="316"/><use href="#h" x="1105" y="52"/><use href="#h" x="1320" y="473"/>
<use href="#g" x="1078" y="125"/><use href="#g" x="1167" y="125"/><use href="#g" x="1078" y="212"/><use href="#g" x="1167" y="212"/><use href="#g" x="1167" y="300"/><use href="#g" x="1040" y="322"/><use href="#g" x="1078" y="395"/><use href="#g" x="1167" y="395"/><use href="#g" x="400" y="370"/><use href="#g" x="487" y="370"/><use href="#g" x="400" y="465"/><use href="#g" x="487" y="465"/><use href="#g" x="355" y="777"/><use href="#g" x="494" y="777"/><use href="#g" x="545" y="832"/><use href="#g" x="298" y="642"/><use href="#g" x="323" y="642"/><use href="#g" x="375" y="642"/><use href="#g" x="418" y="642"/><use href="#g" x="457" y="642"/><use href="#g" x="910" y="622"/><use href="#g" x="940" y="622"/><use href="#g" x="972" y="622"/><use href="#g" x="1010" y="622"/><use href="#g" x="1047" y="622"/><use href="#g" x="1085" y="622"/><use href="#g" x="930" y="742"/><use href="#g" x="1015" y="742"/><use href="#g" x="1292" y="552"/><use href="#g" x="1387" y="457"/><use href="#g" x="1395" y="557"/><use href="#g" x="1268" y="787"/><use href="#g" x="1362" y="787"/><use href="#g" x="520" y="972"/><use href="#g" x="652" y="992"/><use href="#g" x="727" y="952"/><use href="#g" x="940" y="987"/><use href="#g" x="1286" y="922"/><use href="#g" x="1452" y="917"/>
<text x="433" y="144" textLength="174" lengthAdjust="spacingAndGlyphs" style="font-size:60px;fill:#111;font-family:'Liberation Mono',monospace">MMPA</text>
<text x="595" y="320">GND_4</text><text x="595" y="346">GND_3</text><text x="595" y="371">RFIN_L</text><text x="595" y="396">RFIN_M</text><text x="595" y="421">NC_2</text><text x="595" y="447">NC_1</text><text x="595" y="472">NC_0</text><text x="595" y="497">VBATT</text><text x="595" y="522">VIO</text><text x="595" y="547">SCLK</text><text x="595" y="572">SDATA</text><text x="595" y="597">NC</text><text x="595" y="622">RFIN_H</text><text x="595" y="648">GND_1</text><text x="595" y="672">GND_8</text>
<text x="768" y="346">GND_5</text><text x="783" y="371">MB2</text><text x="768" y="396">GND_6</text><text x="783" y="421">MB3</text><text x="783" y="447">MB4</text><text x="768" y="471">GND_7</text><text x="762" y="497">VCC2_2</text><text x="777" y="522">VCC1</text><text x="777" y="547">VDD2</text><text x="768" y="572">GND_8</text><text x="772" y="597">BS400</text><text x="785" y="623">B08</text><text x="768" y="648">GND_9</text><text x="793" y="673">B7</text><text x="762" y="698">GND_10</text>
<text x="570" y="327">15</text><text x="570" y="353">14</text><text x="570" y="378">13</text><text x="570" y="403">12</text><text x="570" y="428">11</text><text x="570" y="453">10</text><text x="575" y="478">9</text><text x="575" y="503">8</text><text x="575" y="528">7</text><text x="575" y="553">6</text><text x="575" y="578">5</text><text x="575" y="603">4</text><text x="575" y="628">3</text><text x="575" y="653">2</text><text x="575" y="678">1</text>
<text x="822" y="353">22</text><text x="822" y="378">23</text><text x="822" y="403">24</text><text x="822" y="428">25</text><text x="822" y="453">26</text><text x="822" y="478">27</text><text x="822" y="503">28</text><text x="822" y="528">29</text><text x="822" y="553">30</text><text x="822" y="578">31</text><text x="822" y="603">32</text><text x="822" y="628">33</text><text x="822" y="653">34</text><text x="822" y="678">35</text><text x="822" y="703">36</text>
<text x="40" y="302">RF_LB4_TX_RF1C</text><text x="165" y="297">RF_LB4_TX_RF1C</text><text x="268" y="294">C1152</text><text x="303" y="295">33P</text><text x="380" y="293">L1131</text><text x="452" y="296">9.1NH</text><text x="490" y="316">C1160</text><text x="403" y="316">C1159</text><text x="405" y="343">3.3P</text><text x="492" y="343">3.3P</text>
<text x="44" y="396">RF_MB2_TX_RF1C</text><text x="172" y="390">RF_MB2_TX_RF1C</text><text x="268" y="389">C1158</text><text x="303" y="388">33P</text><text x="385" y="387">L1126</text><text x="458" y="389">4.7NH</text><text x="403" y="410">C1157</text><text x="492" y="410">C1156</text><text x="405" y="437">1P</text><text x="492" y="437">1P</text>
<text x="124" y="464">VPH_PWR</text><text x="124" y="496">VBIAS</text><text x="195" y="491">VPH_PWR</text><text x="207" y="516">VREG</text><text x="57" y="547">MIPI1_SCLK</text><text x="49" y="571">MIPI1_SDATA</text><text x="165" y="541">MIPI1_SCLK</text><text x="165" y="566">MIPI1_SDATA</text><text x="466" y="536">R1138</text><text x="475" y="558">0R</text><text x="425" y="561">R1118</text><text x="435" y="583">0R</text>
<text x="287" y="590">C1130</text><text x="327" y="590">C1131</text><text x="357" y="590">C1142</text><text x="400" y="590">C1129</text><text x="460" y="586">C1136</text><text x="300" y="614">10P</text><text x="330" y="614">10P</text><text x="358" y="614">104</text><text x="420" y="614">101</text><text x="460" y="614">102</text>
<text x="40" y="696">RF_HB2_TX_RF1C</text><text x="173" y="692">RF_HB2_TX_RF1C</text><text x="268" y="691">C1144</text><text x="310" y="691">8.2P</text><text x="362" y="691">L1119</text><text x="435" y="691">3.9NH</text><text x="360" y="719">C1133</text><text x="497" y="719">C1134</text><text x="360" y="746">1.2P</text><text x="497" y="746">1.2P</text>
<text x="110" y="866">RF_B38B41_PRX_only_RF1C</text><text x="280" y="861">RF_B38B41_PRX_only_RF1C</text><text x="438" y="861">C1148</text><text x="487" y="860">22P</text><text x="573" y="877">22P</text><text x="597" y="875">L1153</text><text x="530" y="923">L1133</text><text x="530" y="935">2.4NH</text><text x="660" y="913">R1112</text><text x="660" y="928">NC</text><text x="615" y="941" style="font-size:15px;font-weight:normal;fill:#333">5097XE89</text><text x="790" y="871">L1116</text><text x="830" y="869">33P</text><text x="730" y="895">C1150</text><text x="730" y="922">NC</text><text x="947" y="875">C1141</text><text x="995" y="875">33P</text><text x="1035" y="874">RF_B41_PRX_RF1C</text><text x="1165" y="878">RF_B41_PRX_RF1C</text><text x="953" y="929">C1101</text><text x="953" y="942">2.7NH ,80.2NH</text>
<text x="1075" y="44">L1153</text><text x="1110" y="44">2NH ,B0.2NH</text><text x="1385" y="44">TX_RF_OUT_B3_BC1</text><text x="1083" y="70">C1148</text><text x="1170" y="70">C1120</text><text x="1085" y="98">1P</text><text x="1173" y="98">NC</text><text x="1080" y="138">C1162</text><text x="1145" y="138">3.9NH</text><text x="1440" y="139">TX_RF_OUT_B8</text><text x="1083" y="160">C1146</text><text x="1170" y="160">C1147</text><text x="1085" y="185">1P</text><text x="1173" y="185">NC</text><text x="1085" y="224">C1143</text><text x="1127" y="227">22P</text><text x="1170" y="246">C1145</text><text x="1173" y="272">NC</text><text x="1412" y="227">TX_RF_OUT_B3_G1800</text><text x="1052" y="262">L1103</text><text x="1052" y="275">NC</text><text x="1063" y="315">L1118</text><text x="1142" y="315">3.6NH</text><text x="1440" y="309">TX_RF_OUT_B2</text><text x="1083" y="334">C1104</text><text x="1170" y="334">C1118</text><text x="1085" y="360">1P</text><text x="1173" y="360">NC</text>
<text x="1312" y="373">L1135</text><text x="1352" y="375">22P</text><text x="1305" y="412">L1127</text><text x="1305" y="425">6.8NH</text><text x="1390" y="397">C1136</text><text x="1392" y="424">NC</text><text x="1302" y="465">L1104</text><text x="1345" y="465">1.8NH</text><text x="1297" y="492">C1113</text><text x="1297" y="518">NC</text><text x="1405" y="507">L1107</text><text x="1405" y="520">NC</text><text x="1078" y="457">VRA_PWD</text><text x="1147" y="457">VRA_VCC2</text><text x="1210" y="457">VRA_PWD</text><text x="1060" y="487">VRA_PWD</text><text x="1112" y="517">VRA_VCC1</text><text x="1162" y="538">VRA_PWD</text>
<text x="912" y="561">C1139</text><text x="943" y="561">C1140</text><text x="975" y="561">C1138</text><text x="1012" y="561">C1127</text><text x="1050" y="561">C1146</text><text x="1088" y="561">C1135</text><text x="912" y="588">101</text><text x="945" y="588">474</text><text x="975" y="588">101</text><text x="1015" y="588">474</text><text x="1052" y="588">101</text><text x="1092" y="588">474</text><text x="925" y="661">L1134</text><text x="995" y="661">NC</text><text x="945" y="696">C1109</text><text x="945" y="708">NC</text><text x="1020" y="688">C1132</text><text x="1022" y="712">NC</text>
<text x="1270" y="680">C1144</text><text x="1315" y="680">33P</text><text x="1335" y="680">12P ,F NFO</text><text x="1287" y="722">L1114</text><text x="1281" y="740">4.7NH</text><text x="1375" y="728">L1101</text><text x="1375" y="740">NC</text><text x="1443" y="669">E1101</text><text x="1326" y="825">L1102</text><text x="1370" y="825">1.8NH</text><text x="1290" y="863">C1116</text><text x="1290" y="890">NC</text><text x="1462" y="870">L1103</text><text x="1462" y="885">4.3NH</text>
<g transform="translate(575 740) rotate(-90)"><text>SC-AMP48X_</text></g><g transform="translate(835 745) rotate(-90)"><text>R1006</text></g>
<g transform="translate(628 735) rotate(-90)"><text>GND_13</text></g><g transform="translate(655 735) rotate(-90)"><text>VB2</text></g><g transform="translate(680 735) rotate(-90)"><text>VB1</text></g><g transform="translate(705 735) rotate(-90)"><text>GND_12</text></g><g transform="translate(730 735) rotate(-90)"><text>HB4</text></g><g transform="translate(757 735) rotate(-90)"><text>GND_11</text></g><g transform="translate(782 735) rotate(-90)"><text>HB3</text></g>
<g transform="translate(655 295) rotate(-90)"><text>LB4</text></g><g transform="translate(680 295) rotate(-90)"><text>LB3</text></g><g transform="translate(705 295) rotate(-90)"><text>LB2</text></g><g transform="translate(732 295) rotate(-90)"><text>LB1</text></g><g transform="translate(758 295) rotate(-90)"><text>LB0</text></g><g transform="translate(782 295) rotate(-90)"><text>MB0</text></g>
<path class="b" d="M1442 725h55v10h-55z"/>
</g>

<!-- Group 4 -->
<g transform="translate(990 500) scale(.34014 .33333)">
<path class="b" d="M24 46h26v14h-26zM24 134h26v14h-26zM24 222h26v14h-26zM24 310h26v14h-26zM68 373h24v12h-24zM412 466h24v14h-24zM322 619h22v12h-22zM322 682h22v12h-22zM362 826h22v12h-22zM30 438h100v74h-100zM210 466h36v14h-36zM705 568h36v14h-36zM1110 542h36v14h-36zM617 730h36v14h-36zM751 760h80v92h-80zM1234 745h22v12h-22zM1092 682h12v30h-12zM1092 782h12v28h-12z"/>
<path class="w" d="M0 52H24M0 140H24M0 228H24M0 316H24M0 379H68M0 472H30M130 472H210M246 472H412M167 472V500M167 535V565M0 625H322M0 688H45M95 688H322M42 688V718M42 748V778M50 832H150M180 832H362M110 832V862M110 888V915M68 505V542H93V505M93 542V565M565 525V573H705M741 573H802V525M623 573V625M623 632V668M562 710V735H617M653 735H790V795M560 760V793H908V765M790 795V820M790 828V865M965 520V549H1110M1146 549H1222V510M1018 549V595M1018 602V645M1098 636V682M1098 712V782M1025 790V750H1234M1025 790V805M1025 812V855M1098 810V855M10 860V895M25 860V895M35 860V895"/>
<g class="k"><circle cx="167" cy="472" r="4"/><circle cx="93" cy="542" r="4"/><circle cx="42" cy="688" r="4"/><circle cx="110" cy="832" r="4"/><circle cx="623" cy="574" r="4"/><circle cx="1018" cy="549" r="4"/><circle cx="1098" cy="750" r="4"/><circle cx="790" cy="795" r="4"/><circle cx="13" cy="895" r="4"/><circle cx="25" cy="895" r="4"/></g>
<use href="#c" x="167" y="565"/><use href="#c" x="623" y="625"/><use href="#c" x="790" y="820"/><use href="#c" x="1018" y="595"/><use href="#c" x="1025" y="805"/>
<use href="#l" x="167" y="505"/><use href="#l" x="42" y="718"/><use href="#l" x="110" y="862"/><use href="#h" x="70" y="688"/><use href="#h" x="150" y="832"/>
<use href="#g" x="92" y="568"/><use href="#g" x="167" y="605"/><use href="#g" x="42" y="782"/><use href="#g" x="13" y="925"/><use href="#g" x="110" y="918"/><use href="#g" x="623" y="670"/><use href="#g" x="790" y="867"/><use href="#g" x="1018" y="648"/><use href="#g" x="1025" y="858"/><use href="#g" x="1098" y="858"/>
<text x="58" y="56">TX_RF_OUT_B3_BC1</text><text x="55" y="143">TX_RF_OUT_B8</text><text x="17" y="250">TX_RF_OUT_B3_G1800</text><text x="55" y="320">TX_RF_OUT_B2</text><text x="0" y="378">RF_OUT_B1</text><text x="95" y="383">TX_RF_OUT_B1</text><text x="0" y="415" style="fill:#888">1405:LF1005-8500BB7+B1B1B1B2B4</text><text x="32" y="433">LF1005-8100BB7</text><text x="40" y="452">E1102</text><text x="35" y="476">IN</text><text x="108" y="476">OUT</text><text x="180" y="470">R1108</text><text x="247" y="474">0R</text><text x="322" y="472">LTE_TX_B34_R2P</text><text x="443" y="476">LTE_TX_B34_R2P</text><text x="170" y="514">L1108</text><text x="170" y="530">NC</text><text x="170" y="560">C1161</text><text x="175" y="586">NC</text>
<text x="205" y="623">TX_RF_OUT_B7</text><text x="354" y="628">TX_RF_OUT_B7</text><text x="45" y="680">C11171.8NH</text><text x="205" y="686">TRX_RF_OUT_B40</text><text x="350" y="691">TRX_RF_OUT_B40</text><text x="56" y="728">L1109</text><text x="56" y="740">7.5NH</text><text x="0" y="815">E1103</text><text x="112" y="823">L1120</text><text x="175" y="823">3.4NH</text><text x="240" y="829">TX_RF_OUT_B41</text><text x="394" y="835">TX_RF_OUT_B41</text><text x="120" y="870">L1103</text><text x="120" y="883">4.3NH</text><text x="0" y="862">LF1005-8500</text>
<text x="533" y="518">VTCXO_28</text><text x="562" y="573">VTCXO_28</text><text x="704" y="566">R1111</text><text x="715" y="590">0R</text><text x="763" y="521">VTCXO28_PWR</text><text x="770" y="568">VTCXO28_PWR</text><text x="627" y="619">C1131</text><text x="630" y="644">105</text><text x="863" y="546" style="font-size:16px;fill:#222">8mil</text><text x="945" y="512">VWIFI</text><text x="968" y="535">VWIFI</text><text x="1093" y="540">R1101</text><text x="1147" y="540">0R</text><text x="1147" y="527">VIO18_PWR</text><text x="1190" y="506">VIO18_PWR</text><text x="1018" y="590">105</text><text x="1018" y="620">C1110</text>
<text x="1065" y="632">VIO18_PWR</text><text x="1103" y="665">VIO18_PWR</text><text x="1105" y="696">R1104</text><text x="540" y="700">VPA_VCC1</text><text x="548" y="731">VPA_VCC1</text><text x="617" y="730">R1114</text><text x="630" y="754">0R</text><text x="680" y="736">10mil</text><text x="535" y="763">VPA_PWD</text><text x="673" y="796">R0101</text><text x="710" y="720" style="fill:#888">R8103/C1101/C1102/C1103</text><text x="750" y="757">C1101/C1102/C1103</text><text x="792" y="813">C1103</text><text x="795" y="839">475</text><text x="882" y="757">VPA_PWD</text><text x="908" y="779">VPA_PWD</text><text x="1158" y="748">ADS_IN1_BTC</text><text x="1265" y="754">ADS_IN1_BTC</text><text x="1028" y="793">C1109</text><text x="1030" y="820">105</text><text x="1078" y="818">NTC-100K,Á1% B-4250K 0402</text><text x="1078" y="829">RT1101</text>
<text x="966" y="736" textLength="300" lengthAdjust="spacingAndGlyphs" style="font-size:40px;font-weight:normal;fill:#222;font-family:'Noto Sans CJK JP',sans-serif">ｿﾘｽKY77643ｷﾅﾖﾃ</text>
</g>
</svg>
<!-- status -->
<div class="a" style="left:0;top:838px;width:1523px;height:20px;background:#0090da;color:#fff;text-align:center;font-family:'Liberation Mono',monospace;font-size:15px;line-height:21px;white-space:nowrap">XZZ Schematics https://www.xzztools.com</div>
</body></html>
